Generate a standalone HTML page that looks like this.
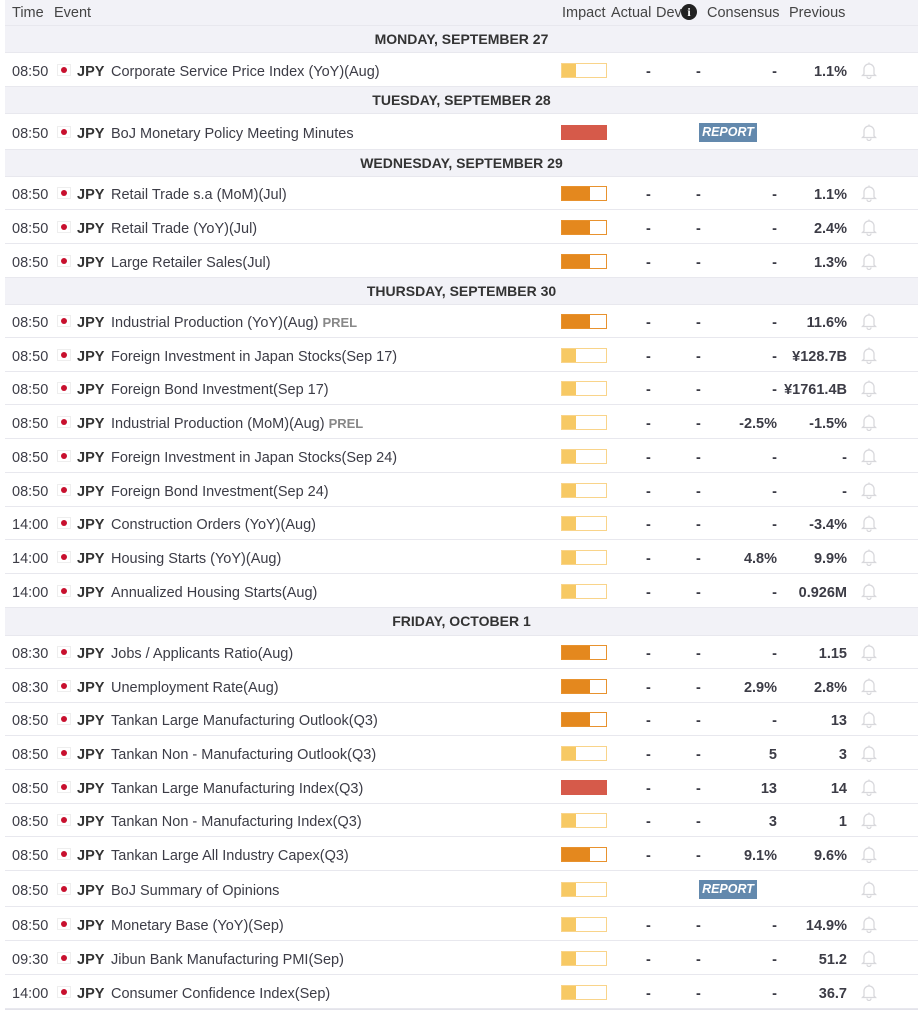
<!DOCTYPE html>
<html><head><meta charset="utf-8"><style>
*{margin:0;padding:0;box-sizing:border-box}
body{width:921px;height:1011px;background:#fff;font-family:"Liberation Sans",Arial,sans-serif;color:#3c3c46;font-size:14.5px;position:relative;overflow:hidden}
.tbl{position:absolute;left:5px;top:0;width:913px;height:1010px;border-left:1px solid #e3e3ea;border-right:1px solid #e3e3ea;border-bottom:1px solid #e3e3ea}
.r{position:absolute;left:5px;width:913px;border-bottom:1px solid #e8e8ee;background:#fff}
.hd{background:#f2f2f7;color:#444}
.day{background:#f2f2f7;font-weight:bold;text-align:center;font-size:14px;color:#333}
.r span{position:absolute;white-space:nowrap}
.t{left:7px}
.f{left:52px;width:14px;height:12px;border:1px solid #eee;background:#fff}
.f:after{content:"";position:absolute;left:3px;top:2px;width:6px;height:6px;border-radius:50%;background:#c8102e}
.c{left:72px;font-weight:bold;color:#333}
.e{left:106px}
.p{color:#888;font-weight:bold;font-size:13px}
.bar{left:556px;width:46px;height:15px;border:1px solid #f9d48a;background:#fff}
.bar i{position:absolute;left:0;top:0;bottom:0;background:#f7c964}
.bar.m{border-color:#e8922e}.bar.m i{background:#e4881e;width:28px}
.bar.l i{width:14px}
.bar.h{border-color:#d65a4a;background:#d65a4a}
.a{left:641px;font-weight:bold}.d{left:691px;font-weight:bold}
.cs{right:141px;font-weight:bold}
.pv{right:71px;font-weight:bold}
.bell{left:856px;width:16px;height:18px}
.rep{left:694px;width:58px;height:19px;background:#6389ad;color:#fff;font-weight:bold;font-style:italic;font-size:12.5px;text-align:center;line-height:19px}
</style></head><body>
<div class="tbl"></div>
<div class="r hd" style="top:0;height:26px"><span style="left:7px;top:5px">Time</span><span style="left:49px;top:5px">Event</span><span style="left:557px;top:5px">Impact</span><span style="left:606px;top:5px">Actual</span><span style="left:651px;top:5px">Dev</span><span style="left:676px;top:4px;width:16px;height:16px;border-radius:50%;background:#222;color:#fff;font-weight:bold;font-size:12px;text-align:center;line-height:16px;font-family:'Liberation Serif',serif">i</span><span style="left:702px;top:5px">Consensus</span><span style="left:784px;top:5px">Previous</span></div>
<div id="rows"></div>
<script>
var bell='<svg width="16" height="18" viewBox="0 0 16 18"><path d="M8 1.5v1.5M3 13V8a5 5 0 0 1 10 0v5l1.5 1.5h-13z M6 15.5a2 2 0 0 0 4 0" fill="none" stroke="#d8d8dc" stroke-width="1.3"/></svg>';
var D=[
['d','MONDAY, SEPTEMBER 27',26,53],
['r','08:50','Corporate Service Price Index (YoY)(Aug)','l','-','-','-','1.1%',53,87],
['d','TUESDAY, SEPTEMBER 28',87,114],
['r','08:50','BoJ Monetary Policy Meeting Minutes','h','','R','','',114,150],
['d','WEDNESDAY, SEPTEMBER 29',150,177],
['r','08:50','Retail Trade s.a (MoM)(Jul)','m','-','-','-','1.1%',177,210],
['r','08:50','Retail Trade (YoY)(Jul)','m','-','-','-','2.4%',210,244],
['r','08:50','Large Retailer Sales(Jul)','m','-','-','-','1.3%',244,278],
['d','THURSDAY, SEPTEMBER 30',278,305],
['r','08:50','Industrial Production (YoY)(Aug) <b class="p">PREL</b>','m','-','-','-','11.6%',305,338],
['r','08:50','Foreign Investment in Japan Stocks(Sep 17)','l','-','-','-','¥128.7B',338,372],
['r','08:50','Foreign Bond Investment(Sep 17)','l','-','-','-','¥1761.4B',372,405],
['r','08:50','Industrial Production (MoM)(Aug) <b class="p">PREL</b>','l','-','-','-2.5%','-1.5%',405,439],
['r','08:50','Foreign Investment in Japan Stocks(Sep 24)','l','-','-','-','-',439,473],
['r','08:50','Foreign Bond Investment(Sep 24)','l','-','-','-','-',473,507],
['r','14:00','Construction Orders (YoY)(Aug)','l','-','-','-','-3.4%',507,540],
['r','14:00','Housing Starts (YoY)(Aug)','l','-','-','4.8%','9.9%',540,574],
['r','14:00','Annualized Housing Starts(Aug)','l','-','-','-','0.926M',574,608],
['d','FRIDAY, OCTOBER 1',608,636],
['r','08:30','Jobs / Applicants Ratio(Aug)','m','-','-','-','1.15',636,669],
['r','08:30','Unemployment Rate(Aug)','m','-','-','2.9%','2.8%',669,703],
['r','08:50','Tankan Large Manufacturing Outlook(Q3)','m','-','-','-','13',703,736],
['r','08:50','Tankan Non - Manufacturing Outlook(Q3)','l','-','-','5','3',736,770],
['r','08:50','Tankan Large Manufacturing Index(Q3)','h','-','-','13','14',770,804],
['r','08:50','Tankan Non - Manufacturing Index(Q3)','l','-','-','3','1',804,837],
['r','08:50','Tankan Large All Industry Capex(Q3)','m','-','-','9.1%','9.6%',837,871],
['r','08:50','BoJ Summary of Opinions','l','','R','','',871,907],
['r','08:50','Monetary Base (YoY)(Sep)','l','-','-','-','14.9%',907,941],
['r','09:30','Jibun Bank Manufacturing PMI(Sep)','l','-','-','-','51.2',941,975],
['r','14:00','Consumer Confidence Index(Sep)','l','-','-','-','36.7',975,1009]];
var h='';
D.forEach(function(x){
 if(x[0]=='d'){var H=x[3]-x[2];h+='<div class="r day" style="top:'+x[2]+'px;height:'+H+'px;line-height:'+(H-1)+'px">'+x[1]+'</div>';return;}
 var t=x[8],H=x[9]-t,m=Math.round((H-1)/2),ty=m-6;
 h+='<div class="r" style="top:'+t+'px;height:'+H+'px">';
 h+='<span class="t" style="top:'+ty+'px">'+x[1]+'</span><span class="f" style="top:'+(m-6)+'px"></span><span class="c" style="top:'+ty+'px">JPY</span><span class="e" style="top:'+ty+'px">'+x[2]+'</span>';
 h+='<span class="bar '+x[3]+'" style="top:'+(m-7)+'px"><i></i></span>';
 if(x[5]=='R'){h+='<span class="rep" style="top:'+(m-9)+'px">REPORT</span>';}
 else{h+='<span class="a" style="top:'+ty+'px">'+x[4]+'</span><span class="d" style="top:'+ty+'px">'+x[5]+'</span><span class="cs" style="top:'+ty+'px">'+x[6]+'</span><span class="pv" style="top:'+ty+'px">'+x[7]+'</span>';}
 h+='<span class="bell" style="top:'+(m-9)+'px">'+bell+'</span></div>';
});
document.getElementById('rows').innerHTML=h;
</script>
</body></html>
